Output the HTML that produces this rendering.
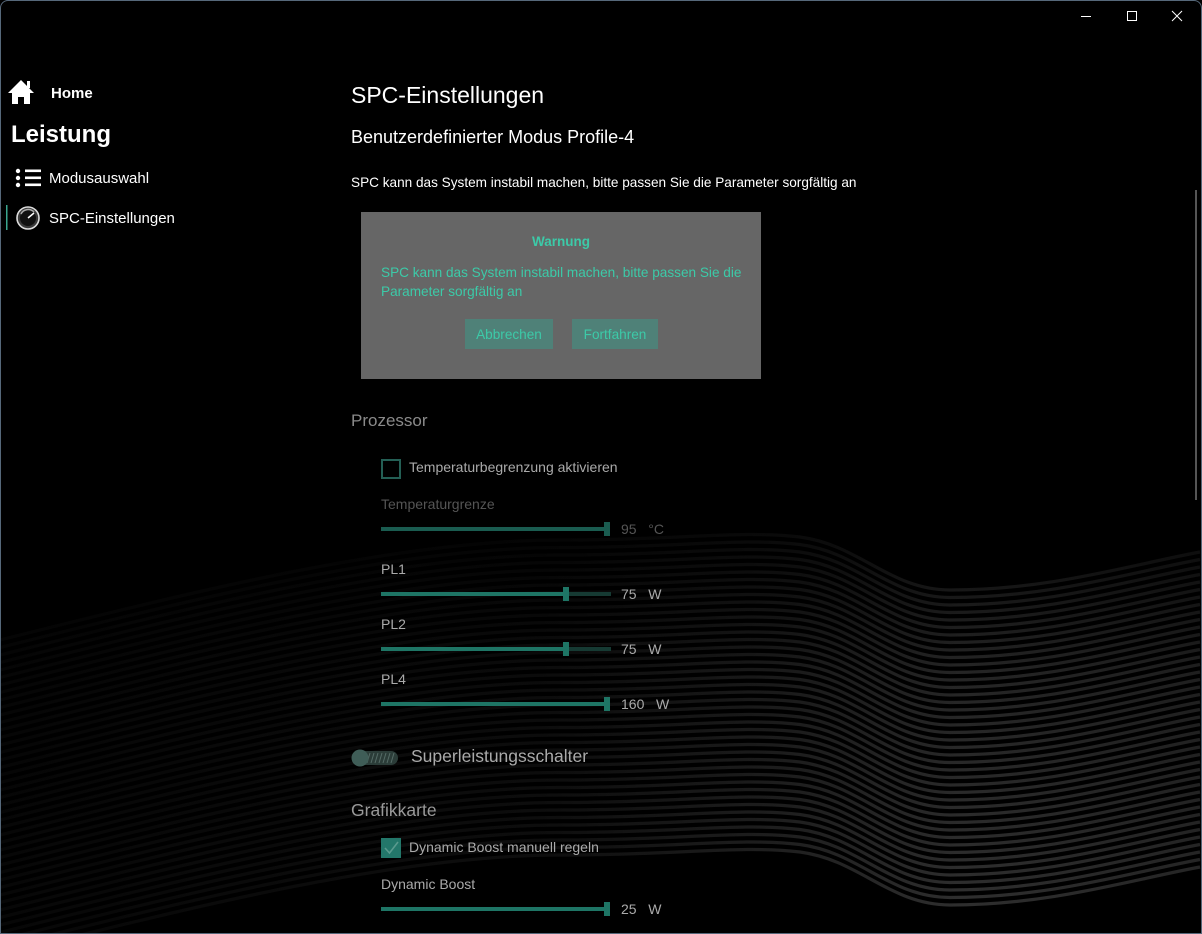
<!DOCTYPE html>
<html><head><meta charset="utf-8"><style>
*{margin:0;padding:0;box-sizing:border-box}
html,body{width:1202px;height:934px;background:#000;overflow:hidden;font-family:"Liberation Sans",sans-serif;color:#fff}
.win{position:absolute;left:0;top:0;width:1202px;height:934px;overflow:hidden;background:#000}
.frame{position:absolute;left:0;top:0;width:1202px;height:934px;border:1px solid #56687a;border-radius:8px 8px 0 0;pointer-events:none}
.t{position:absolute;white-space:nowrap;line-height:1}
svg.bg{position:absolute;left:0;top:0}
.track{position:absolute;height:4px;background:#1e7565}
.rest{position:absolute;height:4px;background:#163a33}
.thumb{position:absolute;width:6px;height:14px;background:#1e7565}
.l{font-size:14px;color:#aaa}
</style></head><body><div class="win">
<svg class="bg" width="1202" height="934" viewBox="0 0 1202 934">
<defs>
<linearGradient id="g" gradientUnits="userSpaceOnUse" x1="0" y1="0" x2="1202" y2="0">
<stop offset="0" stop-color="#070707"/><stop offset="0.45" stop-color="#0e0e0e"/><stop offset="0.6" stop-color="#1c1c1c"/><stop offset="0.8" stop-color="#2e2e2e"/><stop offset="1" stop-color="#262626"/>
</linearGradient>
<linearGradient id="v" gradientUnits="userSpaceOnUse" x1="0" y1="520" x2="0" y2="900">
<stop offset="0" stop-color="#000" stop-opacity="0.75"/><stop offset="0.4" stop-color="#000" stop-opacity="0.2"/><stop offset="1" stop-color="#000" stop-opacity="0"/>
</linearGradient>
<g id="w"><path d="M0,640 C200,590 400,540 560,540 C680,540 740,530 800,537 C860,545 890,590 950,590 C1050,590 1130,565 1200,552" fill="none" stroke="url(#g)" stroke-width="3.2"/></g>
</defs>
<g>
<use href="#w" y="0"/><use href="#w" y="7.5"/><use href="#w" y="15"/><use href="#w" y="22.5"/><use href="#w" y="30"/><use href="#w" y="37.5"/><use href="#w" y="45"/><use href="#w" y="52.5"/><use href="#w" y="60"/><use href="#w" y="67.5"/><use href="#w" y="75"/><use href="#w" y="82.5"/><use href="#w" y="90"/><use href="#w" y="97.5"/><use href="#w" y="105"/><use href="#w" y="112.5"/><use href="#w" y="120"/><use href="#w" y="127.5"/><use href="#w" y="135"/><use href="#w" y="142.5"/><use href="#w" y="150"/><use href="#w" y="157.5"/><use href="#w" y="165"/><use href="#w" y="172.5"/><use href="#w" y="180"/><use href="#w" y="187.5"/><use href="#w" y="195"/><use href="#w" y="202.5"/><use href="#w" y="210"/><use href="#w" y="217.5"/><use href="#w" y="225"/><use href="#w" y="232.5"/><use href="#w" y="240"/><use href="#w" y="247.5"/><use href="#w" y="255"/><use href="#w" y="262.5"/><use href="#w" y="270"/><use href="#w" y="277.5"/><use href="#w" y="285"/><use href="#w" y="292.5"/><use href="#w" y="300"/><use href="#w" y="307.5"/><use href="#w" y="315"/>
</g>
<rect x="0" y="500" width="1202" height="434" fill="url(#v)"/>
<rect x="1195" y="190" width="2" height="310" fill="#555"/>
<line x1="1081" y1="16.5" x2="1091" y2="16.5" stroke="#fff" stroke-width="1"/>
<rect x="1127.5" y="11.5" width="9" height="9" fill="none" stroke="#fff" stroke-width="1"/>
<path d="M1172,11 L1182,21 M1182,11 L1172,21" stroke="#fff" stroke-width="1"/>
<path d="M8,93 L21,80 L34,93 L30,93 L30,104 L24,104 L24,97 L18,97 L18,104 L12,104 L12,93 Z" fill="#fff"/>
<rect x="27" y="81" width="3" height="7" fill="#fff"/>
<circle cx="18" cy="171" r="2.2" fill="#fff"/><circle cx="18" cy="178" r="2.2" fill="#fff"/><circle cx="18" cy="185" r="2.2" fill="#fff"/>
<rect x="25" y="169.5" width="16" height="2.6" fill="#fff"/><rect x="25" y="176.5" width="16" height="2.6" fill="#fff"/><rect x="25" y="183.5" width="16" height="2.6" fill="#fff"/>
<rect x="6" y="205" width="1.5" height="25" fill="#3aa58e"/>
<circle cx="28" cy="218" r="11" fill="#3a3a3a" stroke="#ddd" stroke-width="1.6"/>
<circle cx="28" cy="218" r="8" fill="#111"/>
<path d="M21,214 A8,8 0 0 1 34,212" fill="none" stroke="#aaa" stroke-width="1.5"/>
<line x1="28" y1="218" x2="34" y2="213" stroke="#fff" stroke-width="1.5"/>
<rect x="352" y="751" width="46" height="14" rx="7" fill="#2b3c38"/>
<path d="M370,753 l-3,10 M374,753 l-3,10 M378,753 l-3,10 M382,753 l-3,10 M386,753 l-3,10 M390,753 l-3,10 M394,753 l-3,10" stroke="#556b66" stroke-width="1"/>
<circle cx="360" cy="758" r="8.5" fill="#3f5d57"/>
</svg>

<div class="t" style="left:51px;top:86px;font-size:15px;font-weight:bold">Home</div>
<div class="t" style="left:11px;top:123px;font-size:24px;font-weight:bold">Leistung</div>
<div class="t" style="left:49px;top:171px;font-size:15px">Modusauswahl</div>
<div class="t" style="left:49px;top:211px;font-size:15px">SPC-Einstellungen</div>

<div class="t" style="left:351px;top:84px;font-size:23px">SPC-Einstellungen</div>
<div class="t" style="left:351px;top:128px;font-size:18px">Benutzerdefinierter Modus Profile-4</div>
<div class="t" style="left:351px;top:176px;font-size:13.6px">SPC kann das System instabil machen, bitte passen Sie die Parameter sorgfältig an</div>

<div style="position:absolute;left:361px;top:212px;width:400px;height:167px;background:#666"></div>
<div class="t" style="left:361px;width:400px;text-align:center;top:235px;font-size:13.5px;font-weight:bold;color:#3ccaa8">Warnung</div>
<div class="t" style="left:381px;top:263px;font-size:13.6px;color:#3ccaa8;line-height:19px">SPC kann das System instabil machen, bitte passen Sie die<br>Parameter sorgfältig an</div>
<div style="position:absolute;left:465px;top:319px;width:88px;height:30px;background:#4f8178;color:#3ccaa8;font-size:13.6px;text-align:center;line-height:31px">Abbrechen</div>
<div style="position:absolute;left:572px;top:319px;width:86px;height:30px;background:#4f8178;color:#3ccaa8;font-size:13.6px;text-align:center;line-height:31px">Fortfahren</div>

<div class="t" style="left:351px;top:412px;font-size:17px;color:#8a8a8a">Prozessor</div>
<div style="position:absolute;left:381px;top:459px;width:20px;height:20px;border:2px solid #245f55"></div>
<div class="t l" style="left:409px;top:460px">Temperaturbegrenzung aktivieren</div>

<div class="t l" style="left:381px;top:497px;color:#555">Temperaturgrenze</div>
<div class="track" style="left:381px;top:527px;width:226px;background:#1a5c50"></div>
<div class="thumb" style="left:604px;top:522px;background:#1a5c50"></div>
<div class="t l" style="left:621px;top:522px;color:#555">95&nbsp;&nbsp;&nbsp;°C</div>

<div class="t l" style="left:381px;top:562px">PL1</div>
<div class="track" style="left:381px;top:592px;width:184px"></div>
<div class="rest" style="left:565px;top:592px;width:46px"></div>
<div class="thumb" style="left:563px;top:587px"></div>
<div class="t l" style="left:621px;top:587px">75&nbsp;&nbsp;&nbsp;W</div>

<div class="t l" style="left:381px;top:617px">PL2</div>
<div class="track" style="left:381px;top:647px;width:184px"></div>
<div class="rest" style="left:565px;top:647px;width:46px"></div>
<div class="thumb" style="left:563px;top:642px"></div>
<div class="t l" style="left:621px;top:642px">75&nbsp;&nbsp;&nbsp;W</div>

<div class="t l" style="left:381px;top:672px">PL4</div>
<div class="track" style="left:381px;top:702px;width:226px"></div>
<div class="thumb" style="left:604px;top:697px"></div>
<div class="t l" style="left:621px;top:697px">160&nbsp;&nbsp;&nbsp;W</div>

<div class="t" style="left:411px;top:748px;font-size:17.5px;color:#aaa">Superleistungsschalter</div>
<div class="t" style="left:351px;top:802px;font-size:17.5px;color:#999">Grafikkarte</div>
<div style="position:absolute;left:381px;top:838px;width:20px;height:20px;background:#23776a"></div>
<svg style="position:absolute;left:381px;top:838px" width="20" height="20"><path d="M4,10 L8.5,15 L17,4" fill="none" stroke="#5a9a8e" stroke-width="1.6"/></svg>
<div class="t l" style="left:409px;top:840px">Dynamic Boost manuell regeln</div>
<div class="t l" style="left:381px;top:877px">Dynamic Boost</div>
<div class="track" style="left:381px;top:907px;width:226px"></div>
<div class="thumb" style="left:604px;top:902px"></div>
<div class="t l" style="left:621px;top:902px">25&nbsp;&nbsp;&nbsp;W</div>
<div class="frame"></div>
</div></body></html>
